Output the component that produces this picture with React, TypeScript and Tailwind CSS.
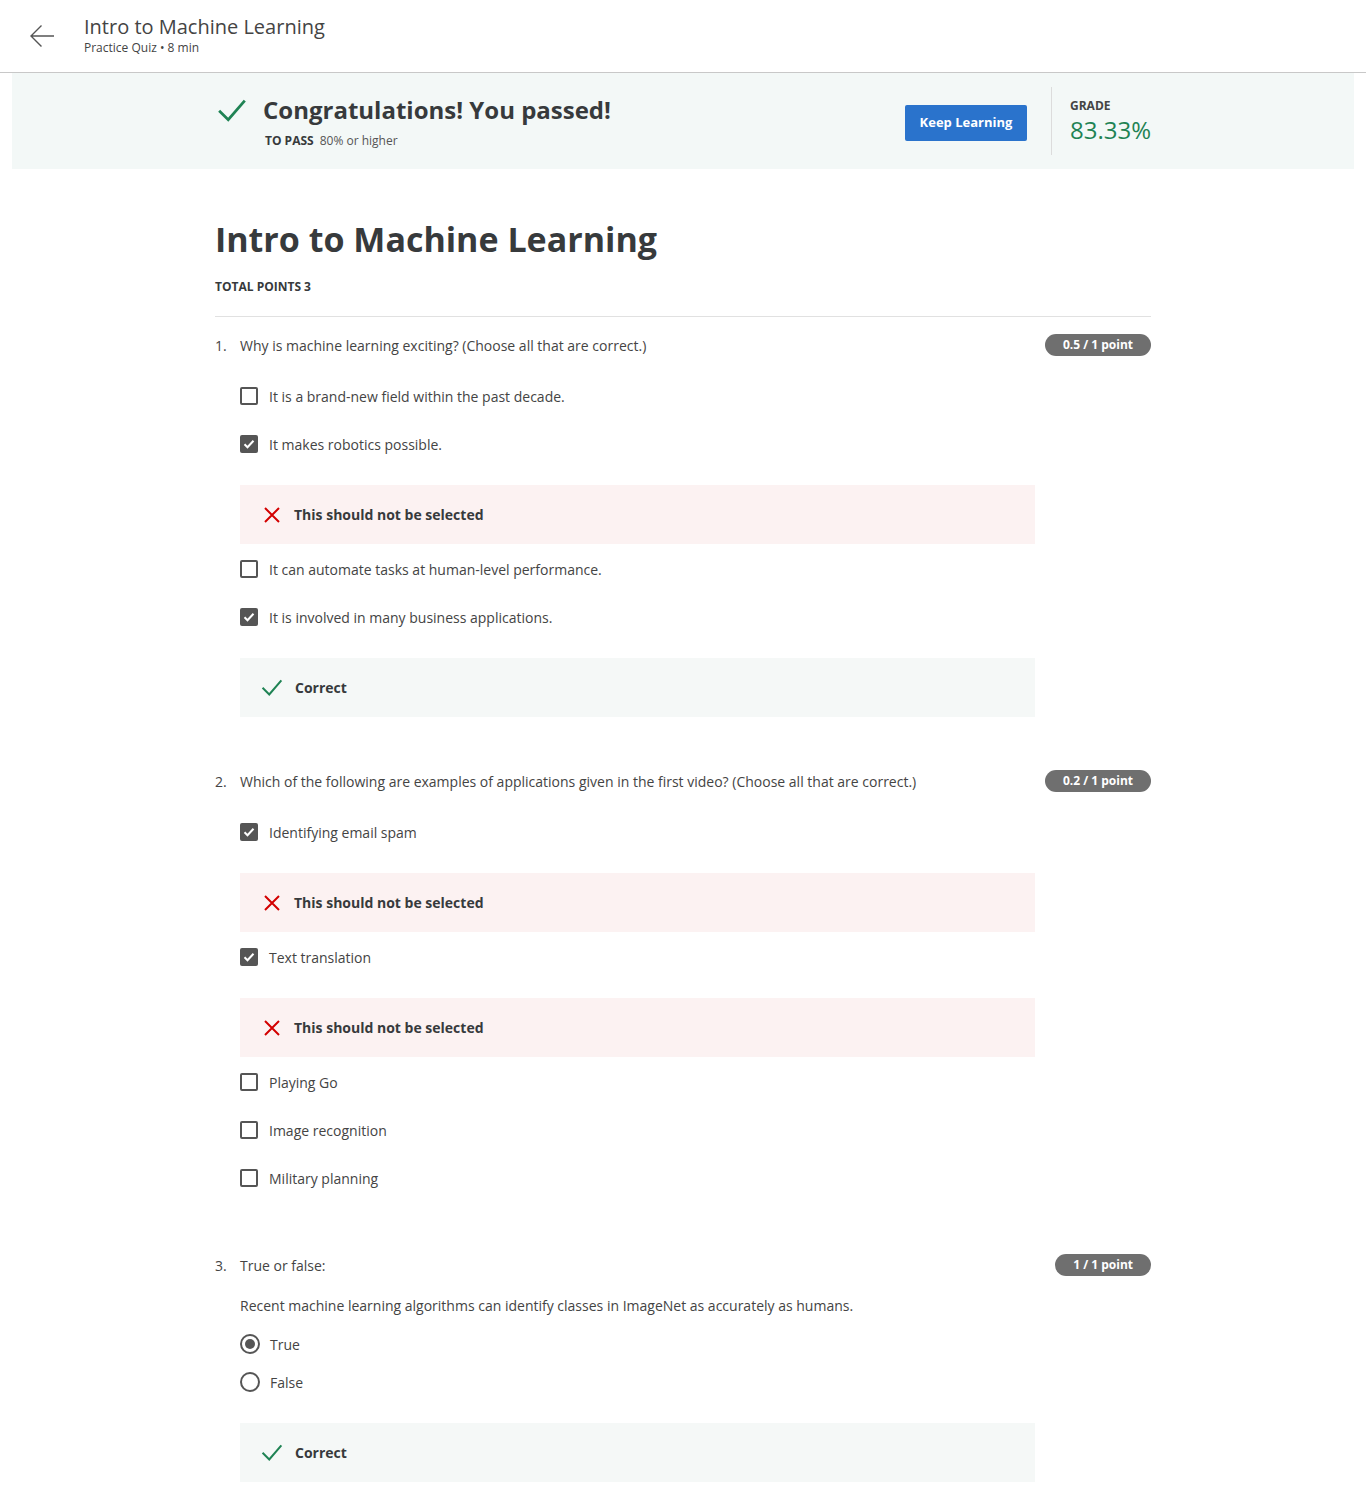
import React from "react";

const font = { fontFamily: '"Open Sans", "Noto Sans", Arial, sans-serif' };

type Opt = { label: string; checked?: boolean; feedback?: "wrong" | "correct" };

function CheckIcon({ className }: { className?: string }) {
  return (
    <svg className={className} viewBox="0 0 24 24" fill="none" stroke="currentColor" strokeWidth={2.2} strokeLinecap="square">
      <path d="M2.5 12.5l6.5 6.5L21.5 4.5" />
    </svg>
  );
}

function XIcon({ className }: { className?: string }) {
  return (
    <svg className={className} viewBox="0 0 18 18" fill="none" stroke="currentColor" strokeWidth={2}>
      <path d="M2 2l14 14M16 2L2 16" />
    </svg>
  );
}

function Checkbox({ checked }: { checked?: boolean }) {
  return checked ? (
    <span className="w-[18px] h-[18px] rounded-[2px] bg-[#555] flex items-center justify-center shrink-0">
      <svg className="w-[12px] h-[12px] text-white" viewBox="0 0 12 12" fill="none" stroke="currentColor" strokeWidth={2}>
        <path d="M1.5 6.2l3 3 6-6.5" />
      </svg>
    </span>
  ) : (
    <span className="w-[18px] h-[18px] rounded-[2px] border-2 border-[#555] shrink-0" />
  );
}

function Radio({ checked }: { checked?: boolean }) {
  return (
    <span className="w-[20px] h-[20px] rounded-full border-2 border-[#555] flex items-center justify-center shrink-0">
      {checked && <span className="w-[10px] h-[10px] rounded-full bg-[#555]" />}
    </span>
  );
}

function Feedback({ kind }: { kind: "wrong" | "correct" }) {
  if (kind === "wrong") {
    return (
      <div className="mt-[17px] mb-[1px] h-[59px] bg-[#fcf2f2] flex items-center pl-[23px]">
        <XIcon className="w-[18px] h-[18px] text-[#d30000]" />
        <span className="ml-[13px] text-[14px] font-bold text-[#373a3c]">This should not be selected</span>
      </div>
    );
  }
  return (
    <div className="mt-[17px] h-[59px] bg-[#f5f8f7] flex items-center pl-[21px]">
      <CheckIcon className="w-[22px] h-[22px] text-[#1f8354]" />
      <span className="ml-[12px] text-[14px] font-bold text-[#373a3c]">Correct</span>
    </div>
  );
}

function Badge({ text }: { text: string }) {
  return (
    <span className="h-[22px] px-[18px] rounded-full bg-[#6f6f6f] text-white text-[12px] font-bold flex items-center shrink-0">
      {text}
    </span>
  );
}

function QuestionHead({ n, text, badge }: { n: number; text: string; badge: string }) {
  return (
    <div className="flex items-center justify-between h-[22px]">
      <div className="flex text-[14px] text-[#444]">
        <span className="w-[25px]">{n}.</span>
        <span>{text}</span>
      </div>
      <Badge text={badge} />
    </div>
  );
}

function CheckQuestion({ n, text, badge, options, className }: { n: number; text: string; badge: string; options: Opt[]; className?: string }) {
  return (
    <div className={className}>
      <QuestionHead n={n} text={text} badge={badge} />
      <div className="pl-[25px] w-[820px] mt-[16px]">
        {options.map((o, i) => (
          <div key={i}>
            <div className="h-[48px] flex items-center">
              <Checkbox checked={o.checked} />
              <span className="ml-[11px] text-[14px] text-[#444]">{o.label}</span>
            </div>
            {o.feedback && <Feedback kind={o.feedback} />}
          </div>
        ))}
      </div>
    </div>
  );
}

export default function App() {
  return (
    <div className="bg-white min-h-[1493px] text-[#373a3c]" style={font}>
      {/* top bar */}
      <div className="h-[73px] border-b border-[#c8c8c8] flex items-center">
        <button className="ml-[29px] w-[26px] h-[26px] text-[#555]">
          <svg viewBox="0 0 26 26" fill="none" stroke="currentColor" strokeWidth={1.4}>
            <path d="M25 13H2M12.5 2.5L2 13l10.5 10.5" />
          </svg>
        </button>
        <div className="ml-[29px] -mt-[2px]">
          <div className="text-[20px] leading-[26px] text-[#444]">Intro to Machine Learning</div>
          <div className="text-[12px] leading-[16px] text-[#444]">Practice Quiz • 8 min</div>
        </div>
      </div>

      {/* result banner */}
      <div className="mx-[12px] h-[96px] bg-[#f3f8f7] flex items-center">
        <div className="w-[936px] mx-auto flex items-center">
          <CheckIcon className="w-[30px] h-[30px] text-[#1f8354] ml-[2px] -mt-[20px]" />
          <div className="ml-[16px] flex-1">
            <div className="text-[24px] font-bold leading-[32px] text-[#373a3c]">Congratulations! You passed!</div>
            <div className="mt-[7px] text-[12px] leading-[16px]">
              <span className="font-bold text-[#373a3c] ml-[2px]">TO PASS</span>
              <span className="ml-[6px] text-[#555]">80% or higher</span>
            </div>
          </div>
          <button className="mt-[4px] h-[36px] w-[122px] rounded-[2px] bg-[#2a73cc] text-white text-[13px] font-bold">Keep Learning</button>
          <div className="w-px h-[68px] bg-[#dcdcdc] ml-[24px]" />
          <div className="ml-[18px] w-[81px]">
            <div className="text-[12px] font-bold leading-[16px] text-[#444]">GRADE</div>
            <div className="mt-[2px] text-[24px] leading-[28px] text-[#1f8354]">83.33%</div>
          </div>
        </div>
      </div>

      {/* main */}
      <div className="w-[936px] mx-auto">
        <h1 className="mt-[44px] text-[34px] font-bold leading-[52px] text-[#373a3c]">Intro to Machine Learning</h1>
        <div className="mt-[14px] text-[12px] font-bold leading-[16px] text-[#373a3c]">TOTAL POINTS 3</div>
        <div className="mt-[21px] h-px bg-[#e1e1e1]" />

        <CheckQuestion
          className="mt-[17px]"
          n={1}
          text="Why is machine learning exciting? (Choose all that are correct.)"
          badge="0.5 / 1 point"
          options={[
            { label: "It is a brand-new field within the past decade." },
            { label: "It makes robotics possible.", checked: true, feedback: "wrong" },
            { label: "It can automate tasks at human-level performance." },
            { label: "It is involved in many business applications.", checked: true, feedback: "correct" },
          ]}
        />

        <CheckQuestion
          className="mt-[53px]"
          n={2}
          text="Which of the following are examples of applications given in the first video? (Choose all that are correct.)"
          badge="0.2 / 1 point"
          options={[
            { label: "Identifying email spam", checked: true, feedback: "wrong" },
            { label: "Text translation", checked: true, feedback: "wrong" },
            { label: "Playing Go" },
            { label: "Image recognition" },
            { label: "Military planning" },
          ]}
        />

        <div className="mt-[52px]">
          <QuestionHead n={3} text="True or false:" badge="1 / 1 point" />
          <div className="pl-[25px] w-[820px]">
            <div className="mt-[19px] h-[20px] flex items-center text-[14px] text-[#444]">
              Recent machine learning algorithms can identify classes in ImageNet as accurately as humans.
            </div>
            <div className="mt-[10px] h-[38px] flex items-center">
              <Radio checked />
              <span className="ml-[10px] text-[14px] text-[#444]">True</span>
            </div>
            <div className="h-[38px] flex items-center">
              <Radio />
              <span className="ml-[10px] text-[14px] text-[#444]">False</span>
            </div>
            <div className="pt-[5px]">
              <Feedback kind="correct" />
            </div>
          </div>
        </div>
      </div>
    </div>
  );
}
